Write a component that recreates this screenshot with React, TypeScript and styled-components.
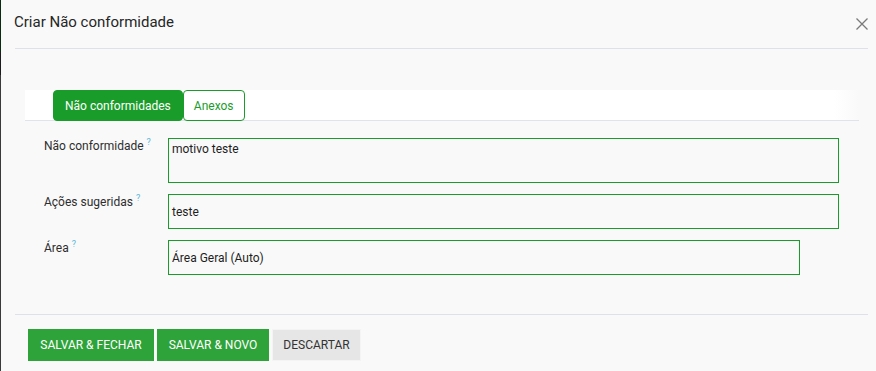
import React from "react";
import styled, { createGlobalStyle } from "styled-components";

const Global = createGlobalStyle`
  html, body { margin: 0; padding: 0; background: #f9f9f9; }
  body { font-family: Roboto, "Liberation Sans", Arial, sans-serif; }
  * { box-sizing: border-box; }
`;

const Page = styled.div`
  display: flex;
  width: 876px;
  height: 371px;
  overflow: hidden;
`;

const EdgeStrip = styled.div`
  width: 1px;
  flex: none;
  background: linear-gradient(
    to bottom,
    #0b2a12 0px,
    #0b2a12 52px,
    #1c1c1c 52px,
    #1c1c1c 75px,
    #3a3a3a 75px,
    #3a3a3a 100%
  );
`;

const Modal = styled.div`
  flex: 1;
  display: flex;
  flex-direction: column;
  background: #f9f9f9;
  color: #333;
`;

const Header = styled.div`
  height: 49px;
  margin: 0 8px 0 14px;
  padding: 0 0 5px 0;
  display: flex;
  align-items: center;
  justify-content: space-between;
  border-bottom: 1px solid #dfe1e8;
`;

const Title = styled.h1`
  margin: 0 0 0 -1px;
  font-size: 15px;
  font-weight: 400;
  color: #262626;
  letter-spacing: 0;
`;

const CloseButton = styled.button`
  border: 0;
  background: none;
  padding: 0;
  margin: 5px 0 0 0;
  width: 12px;
  height: 12px;
  display: flex;
  cursor: pointer;
`;

const TabBar = styled.div`
  margin: 41px 17px 0 24px;
  height: 31px;
  background: linear-gradient(to right, #fff 0%, #fff 97%, #f9f9f9 100%);
  border-bottom: 1px solid #e1e3ea;
  padding-left: 28px;
  display: flex;
  align-items: stretch;
`;

const Tab = styled.button<{ $active?: boolean }>`
  height: 31px;
  margin-bottom: -1px;
  padding: 0 ${(p) => (p.$active ? "11px" : "10px")};
  font-family: inherit;
  font-size: 12px;
  border-radius: 4px;
  border: 1px solid #1a9c2a;
  background: ${(p) => (p.$active ? "#1a9c2a" : "#fff")};
  color: ${(p) => (p.$active ? "#fff" : "#1a9c2a")};
  cursor: pointer;
`;

const Form = styled.div`
  margin: 17px 0 0 43px;
  display: flex;
  flex-direction: column;
  gap: 11px;
`;

const Row = styled.div`
  display: flex;
  align-items: flex-start;
`;

const Label = styled.label`
  width: 124px;
  flex: none;
  font-size: 12px;
  line-height: 16px;
  color: #2e2e2e;
`;

const Help = styled.sup`
  color: #5bb8d8;
  font-size: 9px;
  margin-left: 3px;
  vertical-align: 5px;
  line-height: 0;
`;

const Field = styled.div<{ $width: number; $height: number; $top?: boolean }>`
  width: ${(p) => p.$width}px;
  height: ${(p) => p.$height}px;
  border: 1px solid #1a9c2a;
  padding: ${(p) => (p.$top ? "2px 3px" : "0 3px")};
  display: flex;
  align-items: ${(p) => (p.$top ? "flex-start" : "center")};
  font-size: 12px;
  line-height: 16px;
  color: #1e1e1e;
  background: #f9f9f9;
`;

const Footer = styled.div`
  margin: 39px 8px 0 14px;
  border-top: 1px solid #dfe1e8;
  padding: 14px 0 0 13px;
  display: flex;
  gap: 3px;
`;

const Button = styled.button<{ $variant?: "primary" | "default"; $width: number }>`
  width: ${(p) => p.$width}px;
  height: 32px;
  padding: 0;
  font-family: inherit;
  font-size: 12px;
  text-transform: uppercase;
  cursor: pointer;
  border: 1px solid ${(p) => (p.$variant === "default" ? "#f4f4f4" : "#2ea33a")};
  background: ${(p) => (p.$variant === "default" ? "#e6e6e6" : "#2ea33a")};
  color: ${(p) => (p.$variant === "default" ? "#333" : "#fff")};
`;

const CloseIcon = () => (
  <svg width="12" height="12" viewBox="0 0 12 12">
    <path d="M0.5 0.5 L11.5 11.5 M11.5 0.5 L0.5 11.5" stroke="#7a7a7a" strokeWidth="1.3" fill="none" />
  </svg>
);

export default function App() {
  return (
    <>
      <Global />
      <Page>
        <EdgeStrip />
        <Modal>
          <Header>
            <Title>Criar Não conformidade</Title>
            <CloseButton aria-label="Fechar">
              <CloseIcon />
            </CloseButton>
          </Header>
          <TabBar>
            <Tab $active>Não conformidades</Tab>
            <Tab>Anexos</Tab>
          </TabBar>
          <Form>
            <Row>
              <Label>
                Não conformidade<Help>?</Help>
              </Label>
              <Field $width={671} $height={45} $top>
                motivo teste
              </Field>
            </Row>
            <Row>
              <Label>
                Ações sugeridas<Help>?</Help>
              </Label>
              <Field $width={671} $height={35}>
                teste
              </Field>
            </Row>
            <Row>
              <Label>
                Área<Help>?</Help>
              </Label>
              <Field $width={632} $height={35}>
                Área Geral (Auto)
              </Field>
            </Row>
          </Form>
          <Footer>
            <Button $variant="primary" $width={126}>Salvar &amp; Fechar</Button>
            <Button $variant="primary" $width={112}>Salvar &amp; Novo</Button>
            <Button $variant="default" $width={89}>Descartar</Button>
          </Footer>
        </Modal>
      </Page>
    </>
  );
}
